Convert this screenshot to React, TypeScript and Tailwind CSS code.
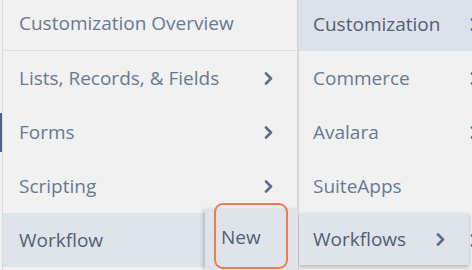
import React from "react";

const Chevron = ({ className = "" }: { className?: string }) => (
  <svg width="9" height="13" viewBox="0 0 9 13" className={className}>
    <path d="M2 1.5 L7 6.5 L2 11.5" fill="none" stroke="currentColor" strokeWidth="2.6" strokeLinecap="round" strokeLinejoin="round" />
  </svg>
);

const leftItems = [
  { label: "Lists, Records, & Fields", chevron: true },
  { label: "Forms", chevron: true },
  { label: "Scripting", chevron: true },
];

const midItems = [
  { label: "Commerce", chevron: true },
  { label: "Avalara", chevron: true },
  { label: "SuiteApps", chevron: false },
];

export default function App() {
  return (
    <div
      className="flex w-[472px] h-[270px] overflow-hidden bg-[#f1f1f1] text-[19px] text-[#667a94]"
      style={{ fontFamily: '"Open Sans", "Noto Sans", sans-serif' }}
    >
      {/* edge strip */}
      <div className="w-[2px] flex-none flex flex-col bg-[#f1f1f1]">
        <div className="mt-[113px] h-[39px] bg-[#4d6487]" />
      </div>

      {/* first column */}
      <div className="relative w-[295px] flex-none border-l border-[#dcdcdc] flex flex-col">
        <div className="h-[51px] flex items-center pl-[16px] pb-[3px] border-b border-[#e0e0e0]">
          Customization Overview
        </div>
        {leftItems.map((item) => (
          <div key={item.label} className="h-[54px] flex items-center justify-between pl-[16px] pr-[24px]">
            <span>{item.label}</span>
            {item.chevron && <Chevron className="text-[#5a6f8e]" />}
          </div>
        ))}
        <div className="h-[54px] flex items-center pl-[16px] bg-[#dfe3ea] text-[#515f74]">Workflow</div>

        {/* sub menu popup */}
        <div className="absolute left-[202px] top-[210px] w-[93px] h-[60px] bg-[#dfe3ea] shadow-[-2px_0_4px_rgba(0,0,0,0.18)] flex items-center">
          <div className="ml-[9px] mt-[-9px] h-[66px] w-[74px] rounded-[9px] border-2 border-[#ef7a4f] flex items-center pl-[5px] pt-[4px] text-[#515f74]">
            New
          </div>
        </div>
      </div>

      {/* second column */}
      <div className="w-[200px] flex-none flex flex-col border-l-2 border-[#d8d8d8]">
        <div className="h-[51px] flex items-center justify-between pl-[14px] pr-[18px] pb-[3px] bg-[#dde2ea] text-[#515f74]">
          <span>Customization</span>
          <Chevron className="text-[#5a6f8e]" />
        </div>
        {midItems.map((item) => (
          <div key={item.label} className="h-[54px] flex items-center justify-between pl-[14px] pr-[18px]">
            <span>{item.label}</span>
            {item.chevron && <Chevron className="text-[#5a6f8e]" />}
          </div>
        ))}
        <div className="h-[54px] flex items-start justify-between pr-[18px]">
          <div className="w-[170px] h-[52px] flex items-center justify-between pl-[14px] pr-[24px] bg-[#dfe3ea] text-[#515f74] shadow-[0_2px_4px_rgba(0,0,0,0.25)]">
            <span>Workflows</span>
            <Chevron className="text-[#5a6f8e]" />
          </div>
          <Chevron className="mt-[21px] text-[#5a6f8e]" />
        </div>
      </div>
    </div>
  );
}
